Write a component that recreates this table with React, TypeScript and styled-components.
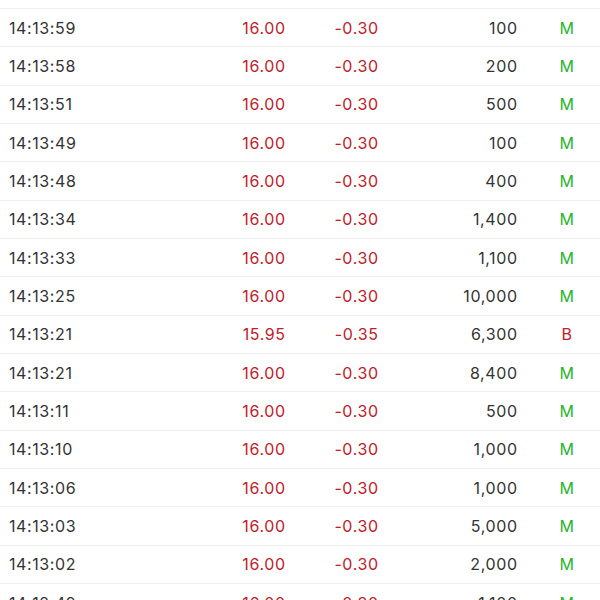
import styled, { createGlobalStyle } from "styled-components";

type Trade = {
  time: string;
  price: string;
  change: string;
  volume: string;
  flag: "M" | "B";
};

const trades: Trade[] = [
  { time: "14:13:59", price: "16.00", change: "-0.30", volume: "100", flag: "M" },
  { time: "14:13:58", price: "16.00", change: "-0.30", volume: "200", flag: "M" },
  { time: "14:13:51", price: "16.00", change: "-0.30", volume: "500", flag: "M" },
  { time: "14:13:49", price: "16.00", change: "-0.30", volume: "100", flag: "M" },
  { time: "14:13:48", price: "16.00", change: "-0.30", volume: "400", flag: "M" },
  { time: "14:13:34", price: "16.00", change: "-0.30", volume: "1,400", flag: "M" },
  { time: "14:13:33", price: "16.00", change: "-0.30", volume: "1,100", flag: "M" },
  { time: "14:13:25", price: "16.00", change: "-0.30", volume: "10,000", flag: "M" },
  { time: "14:13:21", price: "15.95", change: "-0.35", volume: "6,300", flag: "B" },
  { time: "14:13:21", price: "16.00", change: "-0.30", volume: "8,400", flag: "M" },
  { time: "14:13:11", price: "16.00", change: "-0.30", volume: "500", flag: "M" },
  { time: "14:13:10", price: "16.00", change: "-0.30", volume: "1,000", flag: "M" },
  { time: "14:13:06", price: "16.00", change: "-0.30", volume: "1,000", flag: "M" },
  { time: "14:13:03", price: "16.00", change: "-0.30", volume: "5,000", flag: "M" },
  { time: "14:13:02", price: "16.00", change: "-0.30", volume: "2,000", flag: "M" },
  { time: "14:12:49", price: "16.00", change: "-0.30", volume: "1,100", flag: "M" },
];

const App = () => (
  <>
    <GlobalStyle />
    <List>
      {trades.map((t, i) => (
        <Row key={i}>
          <Time>{t.time}</Time>
          <Price>{t.price}</Price>
          <Price>{t.change}</Price>
          <Volume>{t.volume}</Volume>
          <Flag $kind={t.flag}>{t.flag}</Flag>
        </Row>
      ))}
    </List>
  </>
);

const GlobalStyle = createGlobalStyle`
  html, body {
    margin: 0;
    background: #fff;
    overflow: hidden;
  }
  body {
    font-family: Inter, "Liberation Sans", Arial, sans-serif;
  }
`;

const List = styled.div`
  height: 600px;
  overflow: hidden;
  padding-top: 8px;
  box-sizing: border-box;
`;

const Row = styled.div`
  display: grid;
  grid-template-columns: 180px 96px 93px 139px 1fr;
  align-items: center;
  height: 38.33px;
  box-sizing: border-box;
  padding-left: 9px;
  border-top: 1px solid #efefef;
  font-size: 16px;
  letter-spacing: 0.6px;
`;

const Time = styled.span`
  color: #333;
`;

const Price = styled.span`
  color: #c0202a;
  text-align: right;
  margin-right: -0.6px;
`;

const Volume = styled.span`
  color: #333;
  text-align: right;
  margin-right: -0.6px;
`;

const Flag = styled.span<{ $kind: "M" | "B" }>`
  color: ${(p) => (p.$kind === "B" ? "#c0202a" : "#27b52d")};
  text-align: center;
  padding-left: 17px;
`;

export default App;
